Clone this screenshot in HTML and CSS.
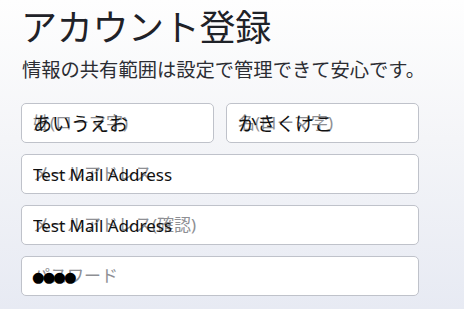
FILE: index.html
```html
<!DOCTYPE html>
<html lang="ja">
<head>
<meta charset="utf-8">
<title>アカウント登録</title>
<link rel="stylesheet" href="styles.css">
</head>
<body>
<main class="page">
  <h1 class="title">アカウント登録</h1>
  <p class="lead">情報の共有範囲は設定で管理できて安心です。</p>
  <form class="form">
    <div class="row">
      <div class="field"><span class="ph">姓(ローマ字)</span><input class="input input-jp" type="text" value="あいうえお"></div>
      <div class="field"><span class="ph">名(ローマ字)</span><input class="input input-jp" type="text" value="かきくけこ"></div>
    </div>
    <div class="field"><span class="ph">メールアドレス</span><input class="input" type="text" value="Test Mail Address"></div>
    <div class="field"><span class="ph">メールアドレス(確認)</span><input class="input" type="text" value="Test Mail Address"></div>
    <div class="field"><span class="ph">パスワード</span><span class="dots">●●●●</span></div>
  </form>
</main>
</body>
</html>
```
FILE: styles.css
```css
html, body {
  margin: 0;
  height: 100%;
}
body {
  background: linear-gradient(180deg, #fefefe 0%, #f4f5f8 45%, #e7eaf3 100%);
  font-family: "Noto Sans", "Noto Sans CJK JP", sans-serif;
  color: #222;
  overflow: hidden;
}
.page {
  padding: 8px 45px 0 21px;
}
.title {
  margin: 0;
  font-size: 36px;
  line-height: 40px;
  font-weight: 400;
  color: #1f2228;
  letter-spacing: -0.3px;
}
.lead {
  margin: 10px 0 0 1px;
  font-size: 19.3px;
  line-height: 24px;
  color: #2b2d33;
  white-space: nowrap;
}
.form {
  margin-top: 21px;
  display: flex;
  flex-direction: column;
  gap: 11px;
}
.row {
  display: grid;
  grid-template-columns: 1fr 1fr;
  gap: 12px;
}
.field {
  position: relative;
  height: 40px;
  box-sizing: border-box;
  background: #fff;
  border: 1px solid #bfc2ca;
  border-radius: 5px;
  display: flex;
  align-items: center;
}
.ph {
  position: absolute;
  left: 11px;
  top: 0;
  line-height: 38px;
  font-size: 17px;
  color: #8e8f94;
  white-space: nowrap;
}
.input {
  position: relative;
  z-index: 1;
  width: 100%;
  height: 100%;
  box-sizing: border-box;
  border: 0;
  outline: 0;
  background: transparent;
  padding: 0 0 0 11px;
  font-family: "Noto Sans", "Noto Sans CJK JP", sans-serif;
  font-size: 17px;
  color: #111;
}
.input-jp {
  font-size: 19px;
}
.dots {
  position: relative;
  z-index: 1;
  padding: 1px 0 0 10px;
  font-family: "DejaVu Sans", sans-serif;
  font-size: 14.5px;
  letter-spacing: -2px;
  color: #000;
}
```
